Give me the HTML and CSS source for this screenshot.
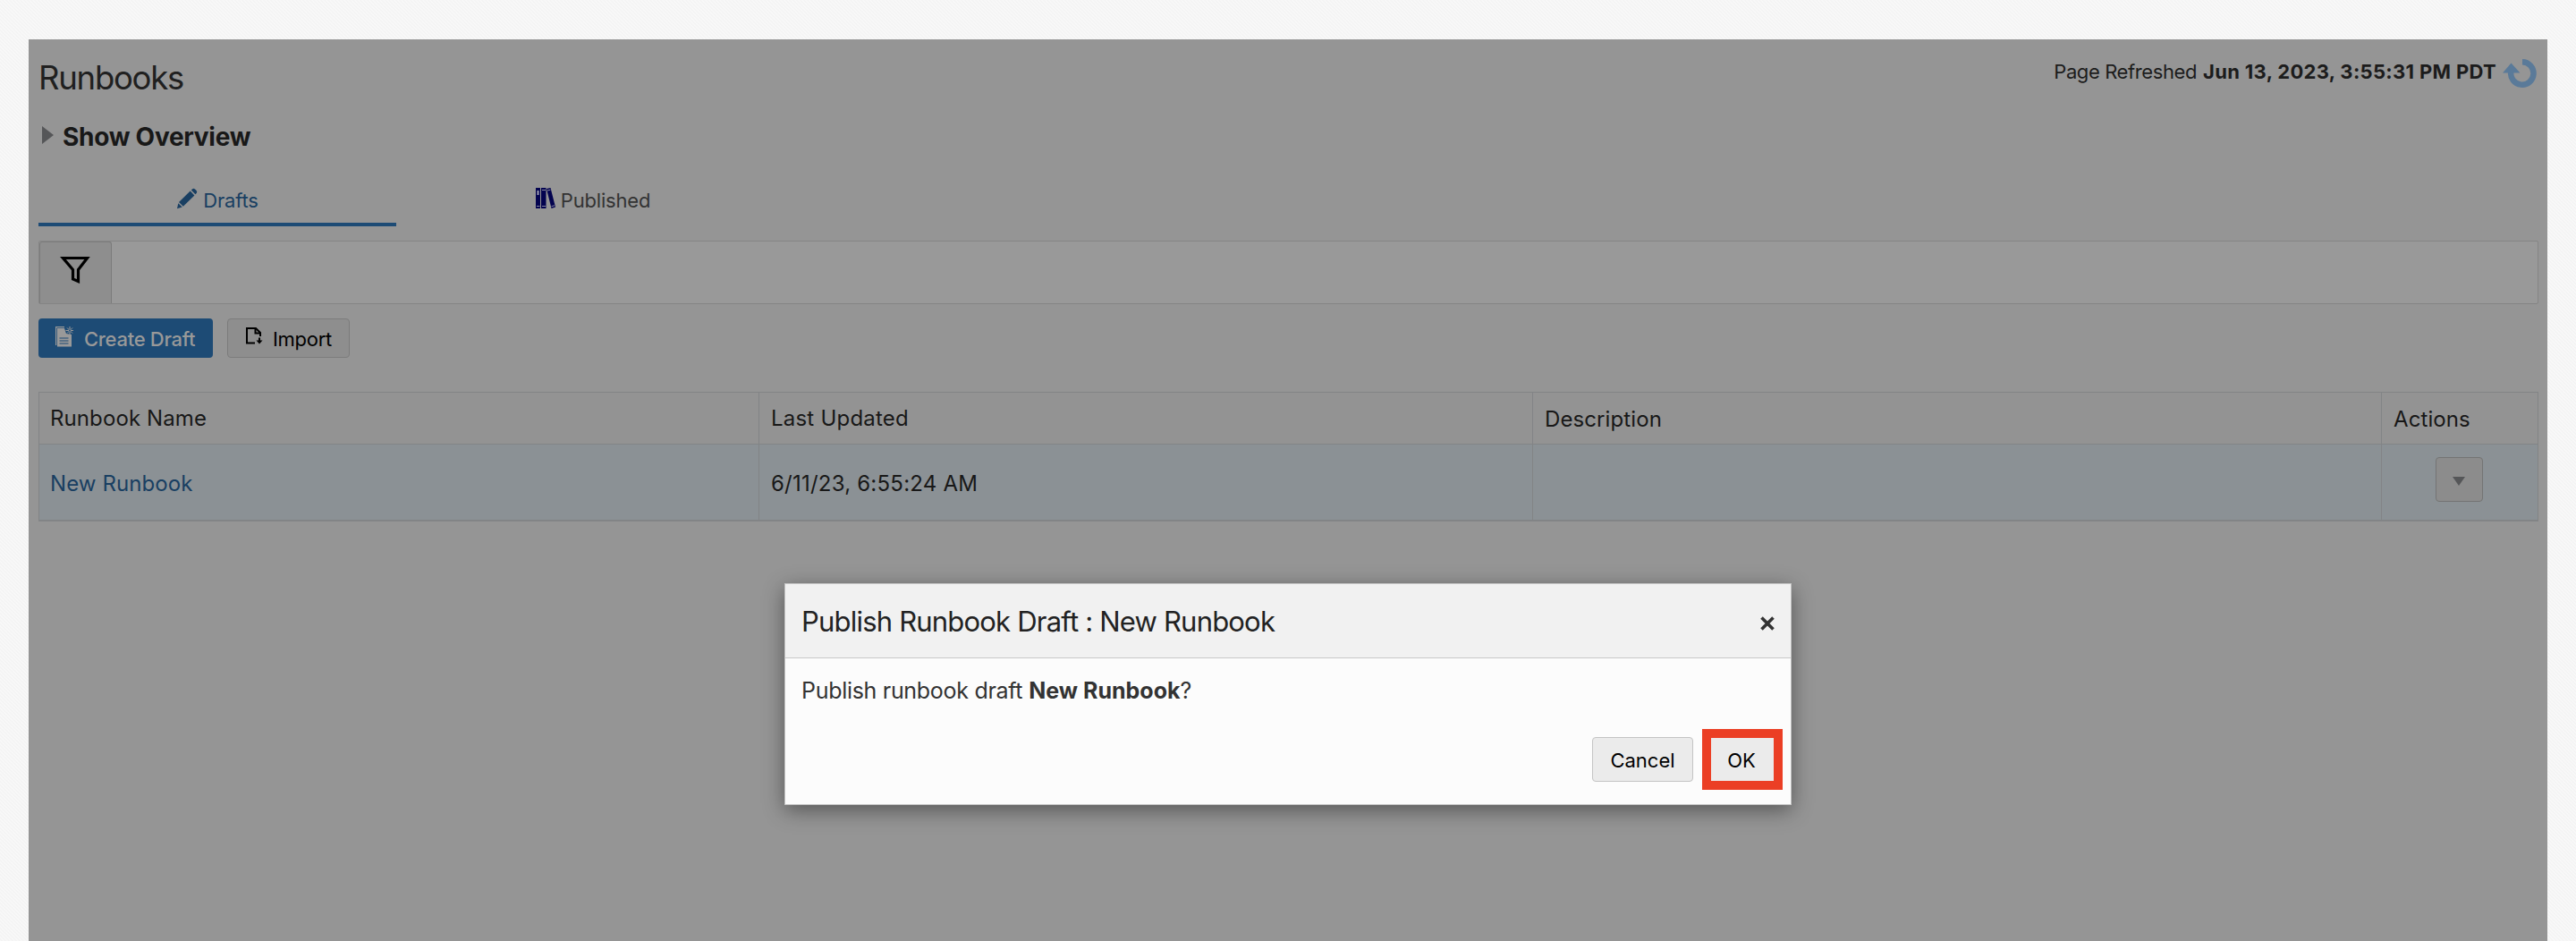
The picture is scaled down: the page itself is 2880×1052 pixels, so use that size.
FILE: index.html
```html
<!DOCTYPE html>
<html lang="en">
<head>
<meta charset="utf-8">
<title>Runbooks</title>
<link rel="stylesheet" href="styles.css">
</head>
<body>
<main class="panel">
  <header class="page-head">
    <h1 class="page-title">Runbooks</h1>
    <div class="refreshed">
      <span class="refreshed-label">Page Refreshed</span>
      <b class="refreshed-time">Jun 13, 2023, 3:55:31 PM PDT</b>
      <svg class="refresh-icon" viewBox="0 0 38 32" width="38" height="32"><path d="M22 3.3A12.7 12.7 0 1 1 9.3 14" fill="none" stroke="#5a7a99" stroke-width="6.5"/><path d="M0 15.5 9.5 4.5 19.5 15.5z" fill="#5a7a99"/></svg>
    </div>
  </header>
  <div class="overview">
    <svg class="disclosure" viewBox="0 0 13 20" width="13" height="20"><path d="M0 0 13 10 0 20z" fill="#555658"/></svg>
    <h2 class="overview-title">Show Overview</h2>
  </div>
  <nav class="tabs">
    <a class="tab tab-active">
      <svg viewBox="0 0 24 24" width="24" height="24" fill="#193f62"><path d="M3 16 15.7 3.6 20.4 8.4 7.8 20.7zM16.8 2.6 18.2 1.2Q19.6.2 21 1.5L22.6 3.1Q23.8 4.5 22.7 5.9L21.4 7.3zM2.3 17.2 6.7 21.6 1 23.3z"/></svg>
      <span>Drafts</span>
    </a>
    <a class="tab">
      <svg viewBox="0 0 22 23" width="22" height="23"><path fill="#03034f" d="M0 0h5v23H0zM6 0h5.500v23H6zM12 1 16.500 0 22 21.500 17.500 23z"/><path stroke="#8585a0" stroke-width="1" d="M1 20.500h3.500M7 20.500h4M7 2.500h4M17.500 20.700 21 19.800M13 3 16.400 2.200"/><path stroke="#a0a0b4" stroke-width="2" d="M2.500 3v5"/></svg>
      <span>Published</span>
    </a>
  </nav>
  <div class="filter">
    <button class="filter-button"><svg viewBox="0 0 34 32" width="34" height="32"><path d="M3.500 2.500H30.500L20.500 15.500V28.500L14.500 26V15.500z" fill="none" stroke="#000" stroke-width="3.200"/></svg></button>
  </div>
  <div class="toolbar">
    <button class="btn btn-primary">
      <svg viewBox="0 0 20 23" width="20" height="23"><path d="M.6 21V.7H10" fill="none" stroke="#999" stroke-width="1.2"/><path fill="#999" d="M2 2H10L12 8 18 9V22.500H2z"/><path d="M4.500 13H14.500M4.500 16H14.500M4.500 19H14.500" stroke="#1d4b75" stroke-width="1.2"/><path d="M16 0V9M11.500 4.500H20.500M13 1.500 19 7.500M19 1.500 13 7.500" stroke="#999" stroke-width="1"/><circle cx="16" cy="4.500" r="1" fill="#1d4b75"/></svg>
      <span>Create Draft</span>
    </button>
    <button class="btn btn-import">
      <svg viewBox="0 0 19 19" width="19" height="19" fill="none" stroke="#000" stroke-width="2"><path d="M10 17.500H1V1H11L16 6V10"/><path d="M10.500 1V6.500H16"/><path d="M15 11.500V16"/><path d="M11.500 14.500H18.500L15 18.500z" fill="#000" stroke="none"/></svg>
      <span>Import</span>
    </button>
  </div>
  <div class="table">
    <div class="row row-head">
      <div class="cell"><span>Runbook Name</span></div>
      <div class="cell"><span class="wide">Last Updated</span></div>
      <div class="cell low"><span>Description</span></div>
      <div class="cell low"><span>Actions</span></div>
    </div>
    <div class="row row-data">
      <div class="cell"><a class="link">New Runbook</a></div>
      <div class="cell"><span class="wide">6/11/23, 6:55:24 AM</span></div>
      <div class="cell"></div>
      <div class="cell cell-menu"><button class="menu-button"><svg viewBox="0 0 14 10" width="14" height="10"><path d="M0 0H14L7 10z" fill="#555658"/></svg></button></div>
    </div>
  </div>
</main>
<section class="dialog">
  <header class="dialog-head">
    <h3 class="dialog-title">Publish Runbook Draft : New Runbook</h3>
    <svg class="close" viewBox="0 0 16 16" width="16" height="16"><path d="M1.500 1.500 14.500 14.500M14.500 1.500 1.500 14.500" stroke="#333" stroke-width="3.600"/></svg>
  </header>
  <p class="dialog-text"><span class="question">Publish runbook draft</span> <b>New Runbook</b>?</p>
  <footer class="dialog-foot">
    <button class="dbtn btn-cancel">Cancel</button>
    <button class="dbtn btn-ok">OK</button>
  </footer>
</section>
</body>
</html>
```
FILE: styles.css
```css
* { box-sizing: border-box; }
body { margin: 0; height: 1052px; overflow: hidden; padding: 44px 32px 0; font-family: Inter, "Liberation Sans", sans-serif; color: #181818;
  background: repeating-linear-gradient(45deg, #f8f8f8 0 1.414px, #f4f4f4 1.414px 2.828px); }
h1, h2, h3, p { margin: 0; font-weight: 400; }
button { font: inherit; margin: 0; padding: 0; }
svg { display: block; flex: none; }
span, b, a, h1, h2, h3 { white-space: nowrap; }
.panel { height: 1008px; background: #959595; padding: 0 10px 0 11px; display: flex; flex-direction: column; }
.page-head { display: flex; justify-content: space-between; height: 65px; }
.page-title { font-size: 36.5px; line-height: 44px; margin-top: 21px; letter-spacing: -1.25px; color: #202020; }
.refreshed { display: flex; align-items: flex-start; margin-top: 22px; padding-right: 2px; font-size: 22px; line-height: 28px; color: #1c1c1c; }
.refreshed-label { letter-spacing: -.4px; }
.refreshed-time { margin: 0 7px; letter-spacing: .33px; }
.overview { display: flex; padding-left: 4px; gap: 10px; height: 84px; }
.disclosure { margin-top: 32px; }
.overview-title { font-size: 28px; line-height: 36px; margin-top: 26px; font-weight: 700; letter-spacing: -.28px; }
.tabs { display: flex; gap: 20px; height: 60px; }
.tab { width: 400px; height: 60px; display: flex; align-items: center; justify-content: center; gap: 6px; padding-top: 5px; font-size: 22px; line-height: 28px; letter-spacing: -.2px; color: #333; border-bottom: 4px solid transparent; }
.tab svg { margin-top: -4px; }
.tab-active { color: #193f62; border-bottom-color: #1d4b75; }
.filter { margin-top: 16px; height: 71px; flex: none; background: #999; border: 1px solid #858585; border-radius: 2px; }
.filter-button { width: 81px; height: 69px; background: #8e8e8e; border: 1px solid #7c7c7c; border-radius: 3px 3px 0 0; border-bottom: 0; display: flex; justify-content: center; padding: 15px 1px 0 0; }
.toolbar { display: flex; gap: 16px; margin-top: 16px; height: 44px; flex: none; }
.btn { height: 44px; border-radius: 4px; display: flex; font-size: 22px; line-height: 28px; letter-spacing: -.3px; }
.btn svg { margin-top: 9px; }
.btn span { margin-top: 9px; }
.btn-primary { width: 195px; border: 0; background: #1d4b75; color: #999; font-weight: 500; padding-left: 19px; gap: 12px; }
.btn-import { width: 137px; border: 1px solid #7c7c7c; background: #8e8e8e; color: #000; padding-left: 20px; gap: 11px; }
.btn-import span { margin-top: 8px; }
.table { margin-top: 38px; border: 1px solid #828486; border-bottom-width: 2px; font-size: 24px; line-height: 30px; letter-spacing: .1px; }
.wide { letter-spacing: .22px; }
.row { display: grid; grid-template-columns: 804px 865px 949px 1fr; }
.cell { border-left: 1px solid #828486; padding-left: 13px; }
.cell:first-child { border-left: 0; padding-left: 12px; }
.row-head { height: 58px; border-bottom: 1px solid #828486; background: #939393; }
.row-head .cell { padding-top: 14px; }
.row-head .low { padding-top: 15px; }
.row-data { height: 84px; background: #8b9195; }
.row-data .cell { padding-top: 29px; }
.link { color: #193f62; }
.row-data .cell-menu { padding: 14px 0 0 60px; }
.menu-button { width: 53px; height: 50px; background: #8c8c8c; border: 1px solid #747474; border-radius: 4px; display: flex; align-items: center; justify-content: center; padding: 4px 1px 0 0; }
.dialog { position: absolute; left: 877px; top: 652px; width: 1126px; height: 248px; background: #fcfcfc; border: 1px solid #c4c4c4; box-shadow: 0 6px 22px rgba(0,0,0,.42); color: #333; display: flex; flex-direction: column; }
.dialog-head { height: 83px; background: #f1f1f1; border-bottom: 1px solid #c8c8c8; display: flex; justify-content: space-between; padding: 0 18px 0 18px; }
.dialog-title { font-size: 31px; line-height: 38px; margin-top: 23px; letter-spacing: -.8px; color: #222; }
.close { margin-top: 36px; }
.dialog-text { padding: 21px 0 0 18px; font-size: 25px; line-height: 30px; height: 78px; }
.question { letter-spacing: -.3px; }
.dialog-foot { display: flex; justify-content: flex-end; gap: 10px; padding-right: 9px; font-size: 22px; letter-spacing: -.5px; }
.dbtn { color: #000; background: #ebebeb; }
.btn-cancel { width: 113px; height: 50px; margin-top: 10px; padding-top: 2px; border: 1px solid #c4c4c4; border-radius: 4px; }
.btn-ok { width: 90px; height: 68px; margin-top: 1px; padding: 2px 2px 0 0; border: 10px solid #eb3f25; }
```
